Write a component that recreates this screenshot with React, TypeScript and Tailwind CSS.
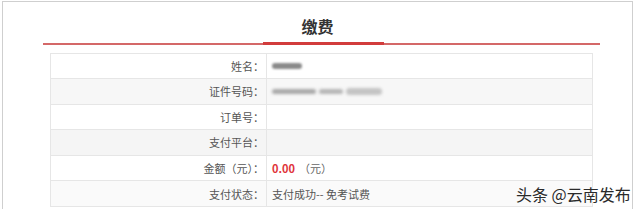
const rows = [
  { label: "姓名：", kind: "name", bg: "bg-white" },
  { label: "证件号码：", kind: "id", bg: "bg-[#f7f7f7]" },
  { label: "订单号：", kind: "empty", bg: "bg-white" },
  { label: "支付平台：", kind: "empty", bg: "bg-[#f5f5f5]" },
  { label: "金额（元）：", kind: "amount", bg: "bg-white" },
  { label: "支付状态：", kind: "status", bg: "bg-[#fafafa]" },
];

function Value({ kind }: { kind: string }) {
  if (kind === "name") {
    return <div className="h-[6px] w-[30px] rounded-sm bg-[#8a8a8a] blur-[1.2px]" />;
  }
  if (kind === "id") {
    return (
      <div className="flex items-center gap-[3px] blur-[1.5px]">
        <div className="h-[5px] w-[44px] rounded-sm bg-[#a8a8a8]" />
        <div className="h-[5px] w-[24px] rounded-sm bg-[#b5b5b5]" />
        <div className="h-[7px] w-[36px] rounded-sm bg-[#c4c4c4]" />
      </div>
    );
  }
  if (kind === "amount") {
    return (
      <span>
        <span className="font-bold text-[#e0353b]">0.00</span>
        <span className="ml-[4px] text-[#666]">（元）</span>
      </span>
    );
  }
  if (kind === "status") {
    return <span className="text-[#555]">支付成功-- 免考试费</span>;
  }
  return null;
}

export default function App() {
  return (
    <div
      className="relative h-[209px] w-[640px] overflow-hidden bg-white"
      style={{ fontFamily: '"Noto Sans CJK SC", "Noto Sans", sans-serif' }}
    >
      <div className="ml-[2px] mr-[7px] mt-[1px] h-[208px] border border-b-0 border-[#cfcfcf]">
        <div className="pt-[13px] text-center text-[16px] font-bold leading-[22px] text-[#333]">缴费</div>
        <div className="relative ml-[40px] mt-[6px] h-[1.5px] w-[557px] bg-[#d46868]">
          <div className="absolute left-[220px] top-[-1px] h-[3px] w-[121px] bg-[#d23c3c]" />
        </div>
        <div className="ml-[47px] mt-[8px] w-[543px] border border-b-0 border-[#e6e6e6] text-[11px] text-[#555]">
          {rows.map((r) => (
            <div key={r.label} className={`flex h-[25.6px] border-b border-[#e6e6e6] ${r.bg}`}>
              <div className="flex w-[216px] items-center justify-end border-r border-[#e6e6e6] pr-[2px]">
                {r.label}
              </div>
              <div className="flex flex-1 items-center pl-[5px]">
                <Value kind={r.kind} />
              </div>
            </div>
          ))}
        </div>
      </div>
      <div
        className="absolute left-[516px] top-[183px] text-[16px] leading-[22px] text-[#2a2a2a]"
        style={{ textShadow: "0 0 2px #fff, 0 0 2px #fff" }}
      >
        头条 @云南发布
      </div>
    </div>
  );
}
